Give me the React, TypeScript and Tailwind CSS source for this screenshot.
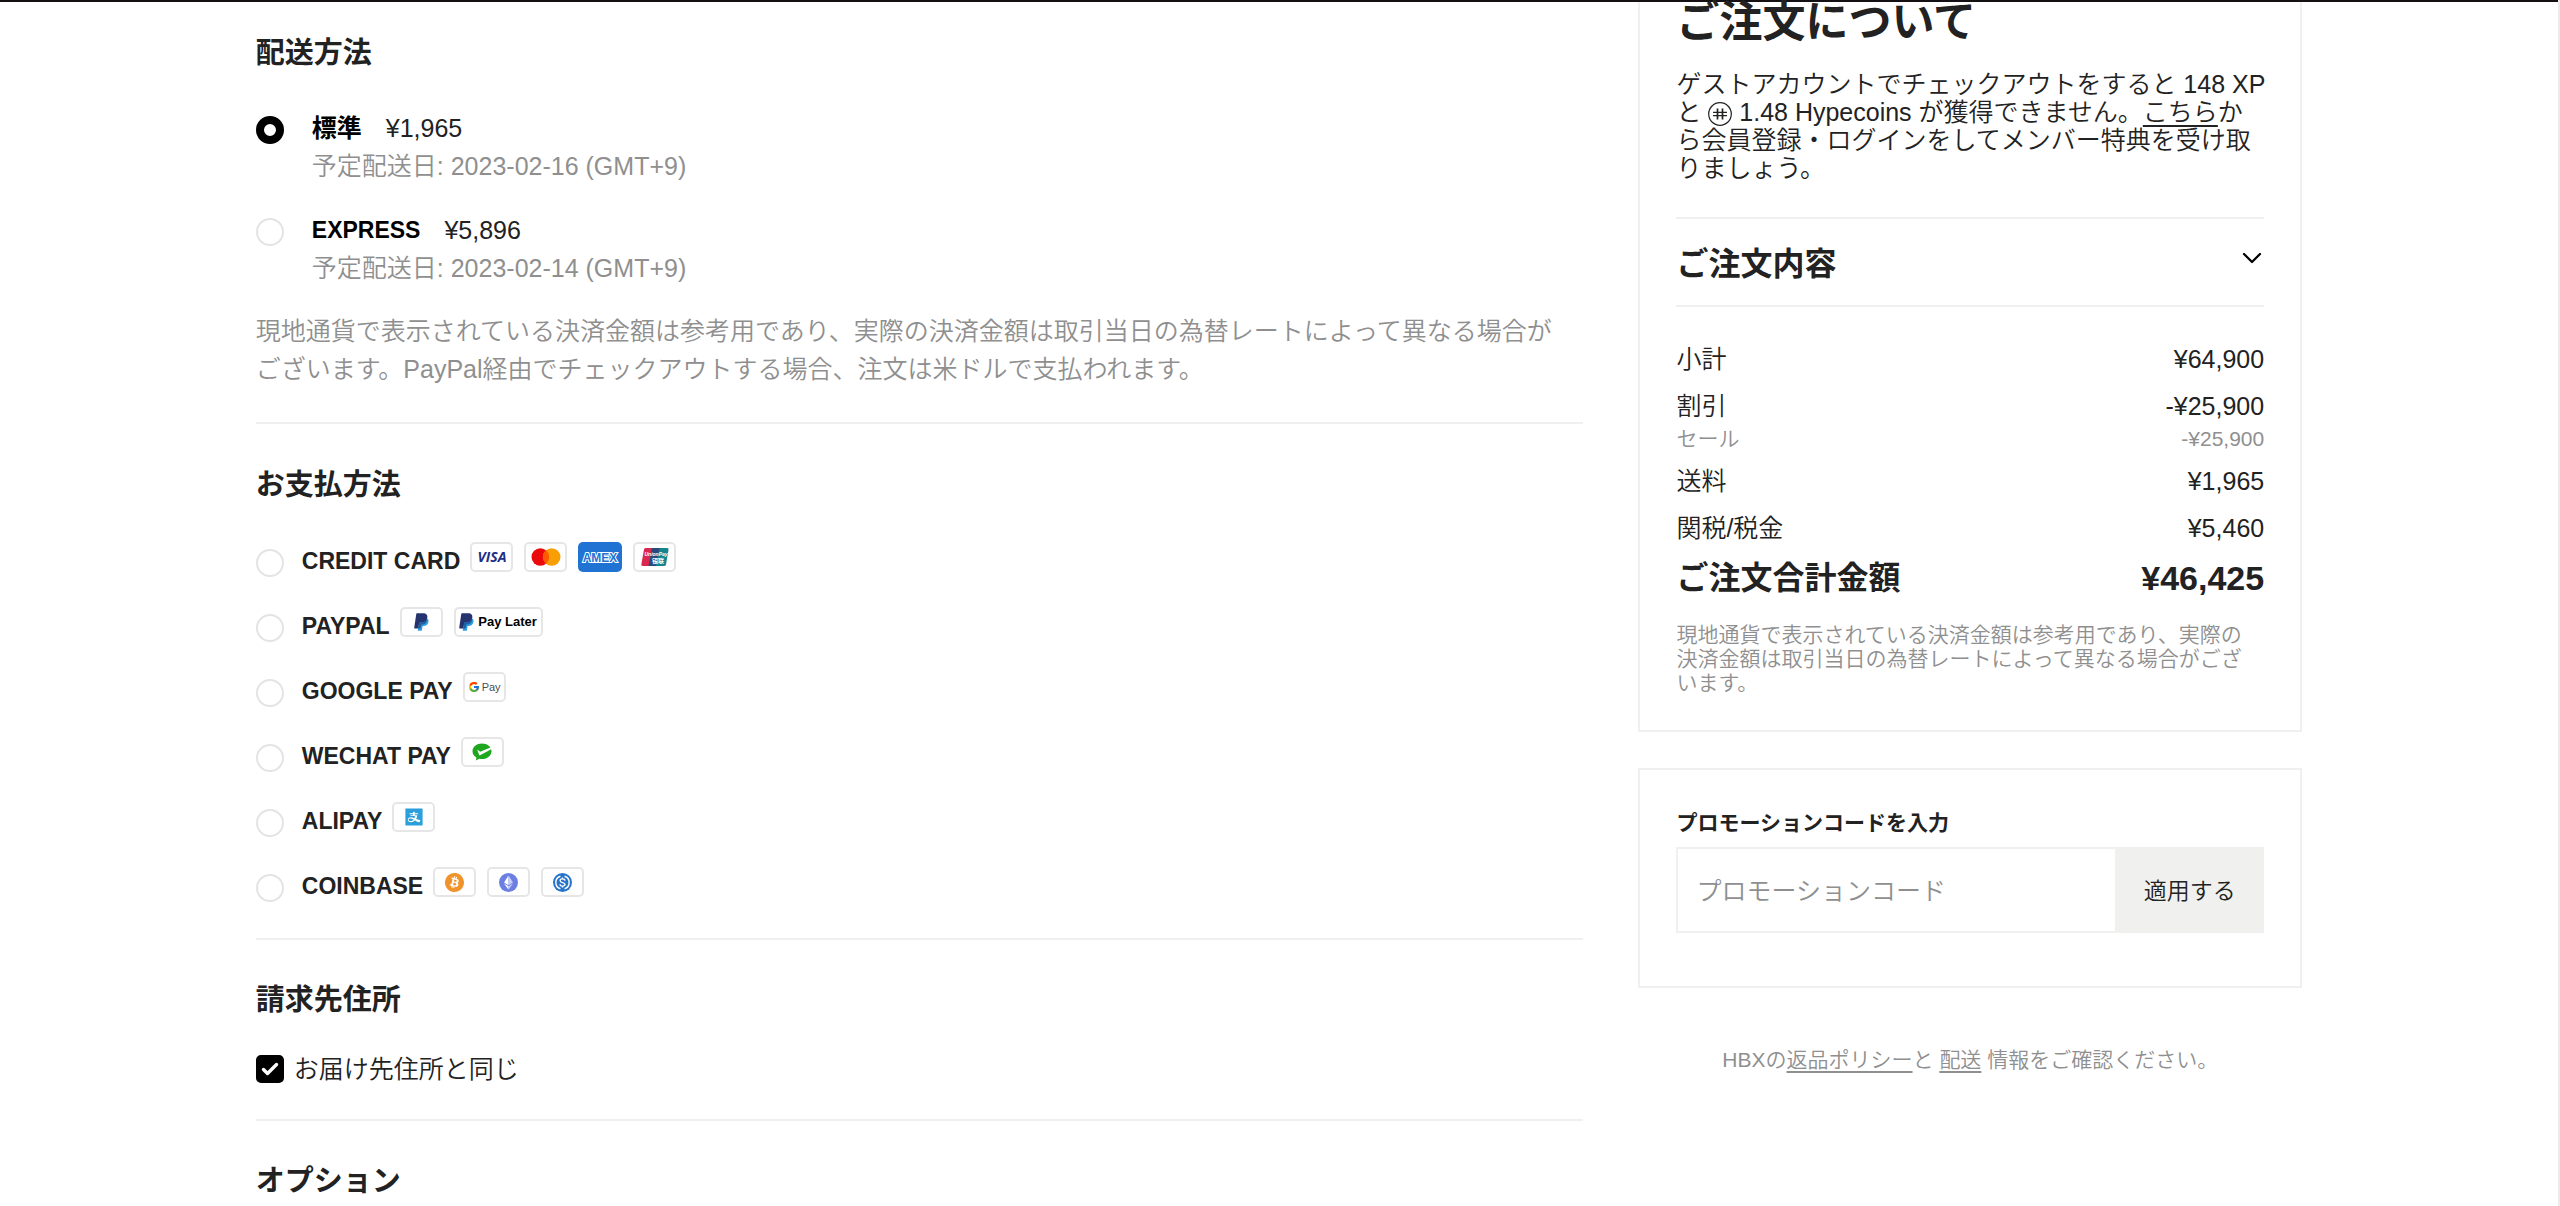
import React, { useState } from 'react';
import { ChevronDown } from 'lucide-react';
import { FcGoogle } from 'react-icons/fc';
import { AiFillAlipaySquare } from 'react-icons/ai';
import { SiBitcoin } from 'react-icons/si';

const Badge: React.FC<{ className?: string; children: React.ReactNode }> = ({
  className = 'w-[43px] border-2 border-[#e6e6e6] bg-white',
  children,
}) => (
  <span className={`flex h-[30px] shrink-0 items-center justify-center rounded-[5px] ${className}`}>
    {children}
  </span>
);

const Visa = () => (
  <Badge>
    <svg viewBox="0 0 38 24" className="h-6 w-[38px]" role="img" aria-label="Visa">
      <text x="19" y="17" textAnchor="middle" fontFamily="Open Sans, sans-serif" fontSize="14" fontWeight="700" fontStyle="italic" fill="#1f2f86">
        VISA
      </text>
    </svg>
  </Badge>
);

const Mastercard = () => (
  <Badge>
    <svg viewBox="0 0 30 18" className="h-[18px] w-[30px]" role="img" aria-label="Mastercard">
      <circle cx="9.3" cy="9" r="8.8" fill="#eb0a0b" />
      <circle cx="20.7" cy="9" r="8.8" fill="#f99f06" />
      <path d="M15 2.3a8.8 8.8 0 0 1 0 13.4a8.8 8.8 0 0 1 0-13.4z" fill="#ff5a00" />
    </svg>
  </Badge>
);

const Amex = () => (
  <Badge className="w-[44px] bg-[#2173d3]">
    <svg viewBox="0 0 44 24" className="h-6 w-11" role="img" aria-label="Amex">
      <text x="22" y="16.500" textAnchor="middle" fontFamily="Liberation Sans, sans-serif" fontSize="12" fontWeight="700" fill="#2173d3" stroke="#ffffff" strokeWidth="2" paintOrder="stroke">
        AMEX
      </text>
    </svg>
  </Badge>
);

const UnionPay = () => (
  <Badge>
    <svg viewBox="0 0 28 18" className="h-[18px] w-7" role="img" aria-label="UnionPay">
      <path d="M4.5 0H12L8.5 18H1.5Q0 18 .4 16L3 1.5Q3.3 0 4.5 0z" fill="#d9274f" />
      <path d="M11 0H20L16.500 18H7.500z" fill="#2b4a7c" />
      <path d="M18.500 0H26Q28 0 27.500 2L25 16.500Q24.700 18 23 18H15z" fill="#16848a" />
      <text x="15" y="8" textAnchor="middle" fontFamily="Liberation Sans, sans-serif" fontSize="5" fontWeight="700" fontStyle="italic" fill="#ffffff">
        UnionPay
      </text>
      <text x="17" y="15" textAnchor="middle" fontFamily="Noto Sans CJK JP, sans-serif" fontSize="6" fontWeight="700" fill="#ffffff">
        银联
      </text>
    </svg>
  </Badge>
);

const PayPalMark = () => (
  <svg viewBox="0 0 15 18" className="h-[18px] w-[15px]" aria-hidden="true">
    <path d="M6 5h6.200c2.100.600 2.700 2.200 2.200 4.200c-.7 2.900-2.600 3.800-5 3.800h-.8l-.7 4.200c-.1.400-.3.600-.7.600H3.700l.4-2.600z" fill="#2f9fe0" />
    <path d="M3 0.200h6.200c2.900 0 4.600 1.600 4.100 4.500c-.6 3.300-2.600 4.700-5.700 4.700H5.900c-.4 0-.6.200-.7.600L4.300 15.400H.7c-.4 0-.6-.3-.5-.7L2.300.8c0-.4.300-.6.700-.6z" fill="#25346f" />
    <path d="M12.900 5.800c-.7 2.400-2.500 3.600-5.300 3.600H5.900c-.4 0-.6.200-.7.600l-.9 5.400h2.300l.7-3.900c3.600.1 6.300-1.600 5.600-5.700z" fill="#1f5f9f" />
  </svg>
);

const PayPal = () => (
  <Badge>
    <PayPalMark />
  </Badge>
);

const PayLater = () => (
  <Badge className="w-[89px] gap-1 border-2 border-[#e6e6e6] bg-white">
    <PayPalMark />
    <span className="text-[13px] leading-4 font-bold whitespace-nowrap text-black">Pay Later</span>
  </Badge>
);

const GooglePay = () => (
  <Badge className="w-[43px] gap-[2px] border-2 border-[#e6e6e6] bg-white">
    <FcGoogle className="h-3 w-3 shrink-0" />
    <span className="text-[11px] leading-4 text-[#4a4d51]">Pay</span>
  </Badge>
);

const WeChat = () => (
  <Badge>
    <svg viewBox="0 0 20 18" className="h-[18px] w-5" aria-hidden="true">
      <path d="M10 .5C4.700.500.500 3.800.500 8.200c0 2.700 1.500 4.900 3.900 6.300L3.900 17.600l3.300-1.900c.9.200 1.800.300 2.800.300c5.300 0 9.500-3.400 9.500-7.800S15.300.500 10 .500z" fill="#1fa81f" />
      <path d="M5.200 6.600l3 2.200L19 4.200l.6 1.800L8.100 12.200c-.5.200-.9.100-1.100-.4z" fill="#ffffff" />
    </svg>
  </Badge>
);

const Alipay = () => (
  <Badge>
    <AiFillAlipaySquare className="h-[22px] w-[22px] text-[#2b9fdc]" />
  </Badge>
);

const Bitcoin = () => (
  <Badge>
    <SiBitcoin className="h-[19px] w-[19px] text-[#f0932a]" />
  </Badge>
);

const Ethereum = () => (
  <Badge>
    <svg viewBox="0 0 32 32" className="h-[19px] w-[19px]" aria-hidden="true">
      <circle cx="16" cy="16" r="16" fill="#6b7fe3" />
      <path d="M16 4l-7.500 12.200L16 20.700z" fill="#ffffff" />
      <path d="M16 4v16.700l7.500-4.500z" fill="#c9d0f6" />
      <path d="M8.500 17.800L16 28v-5.700z" fill="#ffffff" />
      <path d="M16 22.300V28l7.500-10.200z" fill="#c9d0f6" />
    </svg>
  </Badge>
);

const Usdc = () => (
  <Badge>
    <svg viewBox="0 0 32 32" className="h-[19px] w-[19px]" fill="none" aria-hidden="true">
      <circle cx="16" cy="16" r="16" fill="#2775ca" />
      <path d="M12.500 5.500a11 11 0 0 0 0 21M19.500 5.500a11 11 0 0 1 0 21" stroke="#ffffff" strokeWidth="2.400" />
      <path d="M20 13c0-2-1.700-3-4-3s-4 1-4 2.900c0 4.300 8.200 2 8.200 6.100c0 2-1.800 3.100-4.200 3.100s-4.200-1.100-4.200-3.100M16 7.500V10M16 22v2.500" stroke="#ffffff" strokeWidth="2.200" />
    </svg>
  </Badge>
);

const HypecoinIcon = () => (
  <svg viewBox="0 0 24 24" className="inline-block h-6 w-6 align-[-5px]" fill="none" stroke="#222222" aria-hidden="true">
    <circle cx="12" cy="12" r="11.300" strokeWidth="1.200" />
    <path d="M9.500 6.500v11M14.500 6.500v11" strokeWidth="1.700" />
    <path d="M5 10.300h14M5 13.700h14" strokeWidth="1.200" />
  </svg>
);

const shippingMethods = [
  { id: 'standard', name: '標準', nameClass: 'text-[25px]', price: '¥1,965', date: '2023-02-16' },
  { id: 'express', name: 'EXPRESS', nameClass: 'text-[23px]', price: '¥5,896', date: '2023-02-14' },
];

const paymentMethods = [
  { id: 'card', name: 'CREDIT CARD', badges: [Visa, Mastercard, Amex, UnionPay] },
  { id: 'paypal', name: 'PAYPAL', badges: [PayPal, PayLater] },
  { id: 'google', name: 'GOOGLE PAY', badges: [GooglePay] },
  { id: 'wechat', name: 'WECHAT PAY', badges: [WeChat] },
  { id: 'alipay', name: 'ALIPAY', badges: [Alipay] },
  { id: 'coinbase', name: 'COINBASE', badges: [Bitcoin, Ethereum, Usdc] },
];

const radioClass =
  'h-7 w-7 shrink-0 appearance-none rounded-full border-2 border-[#e4e4e4] bg-white checked:border-[8px] checked:border-black';

const SectionTitle: React.FC<{ children: React.ReactNode }> = ({ children }) => (
  <h2 className="text-[29px] leading-10 font-bold">{children}</h2>
);

const SummaryRow: React.FC<{ label: string; value: string }> = ({ label, value }) => (
  <div className="flex justify-between text-[25px] leading-[38px]">
    <dt>{label}</dt>
    <dd>{value}</dd>
  </div>
);

const App: React.FC = () => {
  const [shipping, setShipping] = useState('standard');
  const [payment, setPayment] = useState('');
  const [sameAddress, setSameAddress] = useState(true);
  const [promoCode, setPromoCode] = useState('');

  return (
    <div className="flex min-h-screen bg-white font-['Liberation_Sans','Noto_Sans_CJK_JP',sans-serif] font-[350] text-[#222222]">
      <div className="min-w-0 flex-1">
        <div className="h-[2px] bg-[#141014]" />

        <main className="grid grid-cols-[minmax(0,2fr)_minmax(0,1fr)] gap-[55px] px-[10%]">
          <div>
            <section className="border-b-2 border-[#f0f0f0] pt-[31px] pb-[34px]">
              <SectionTitle>配送方法</SectionTitle>
              <div className="mt-9 flex flex-col gap-[26px]">
                {shippingMethods.map((method) => (
                  <label key={method.id} className="flex items-start gap-7">
                    <input
                      type="radio"
                      name="shipping"
                      className={`mt-[7px] ${radioClass}`}
                      checked={shipping === method.id}
                      onChange={() => setShipping(method.id)}
                    />
                    <span className="block text-[25px] leading-[38px]">
                      <span className="flex gap-6">
                        <span className={`font-bold text-black ${method.nameClass}`}>{method.name}</span>
                        <span>{method.price}</span>
                      </span>
                      <span className="block text-[#8f8f8f]">予定配送日: {method.date} (GMT+9)</span>
                    </span>
                  </label>
                ))}
              </div>
              <p className="mt-[25px] text-[25px] leading-[38px] text-[#8f8f8f]">
                現地通貨で表示されている決済金額は参考用であり、実際の決済金額は取引当日の為替レートによって異なる場合が
                <br />
                ございます。PayPal経由でチェックアウトする場合、注文は米ドルで支払われます。
              </p>
            </section>

            <section className="border-b-2 border-[#f0f0f0] pt-[41px] pb-[30px]">
              <SectionTitle>お支払方法</SectionTitle>
              <div className="mt-[38px] flex flex-col gap-[25px]">
                {paymentMethods.map((method) => (
                  <label key={method.id} className="flex h-10 items-center">
                    <input
                      type="radio"
                      name="payment"
                      className={radioClass}
                      checked={payment === method.id}
                      onChange={() => setPayment(method.id)}
                    />
                    <span className="pb-1 pl-[18px] text-[23px] leading-7 font-bold">{method.name}</span>
                    <span className="flex gap-[11px] pb-3 pl-[10px]">
                      {method.badges.map((Icon, index) => (
                        <Icon key={index} />
                      ))}
                    </span>
                  </label>
                ))}
              </div>
            </section>

            <section className="border-b-2 border-[#f0f0f0] pt-10 pb-[31px]">
              <SectionTitle>請求先住所</SectionTitle>
              <label className="mt-[30px] flex items-center gap-[10px] text-[25px] leading-[38px]">
                <span className="relative flex h-7 w-7 shrink-0">
                  <input
                    type="checkbox"
                    className="peer h-7 w-7 appearance-none rounded-[5px] border-2 border-[#e4e4e4] checked:border-black checked:bg-black"
                    checked={sameAddress}
                    onChange={(e) => setSameAddress(e.target.checked)}
                  />
                  <svg
                    viewBox="0 0 28 28"
                    className="pointer-events-none absolute inset-0 hidden h-7 w-7 peer-checked:block"
                    fill="none"
                    aria-hidden="true"
                  >
                    <path d="M7.500 14.500l4 4l9-9" stroke="#ffffff" strokeWidth="3.400" strokeLinecap="round" strokeLinejoin="round" />
                  </svg>
                </span>
                お届け先住所と同じ
              </label>
            </section>

            <section className="pt-10">
              <SectionTitle>オプション</SectionTitle>
            </section>
          </div>

          <aside>
            <div className="border-x-2 border-b-2 border-[#f0f0f0] px-9 pb-[35px]">
              <h1 className="text-[43px] leading-10 font-bold">ご注文について</h1>
              <p className="mt-7 pb-[35px] text-[25px] leading-7 whitespace-nowrap">
                ゲストアカウントでチェックアウトをすると 148 XP
                <br />
                と <HypecoinIcon /> 1.48 Hypecoins が獲得できません。
                <a href="#login" className="underline underline-offset-4">こちら</a>か
                <br />
                ら会員登録・ログインをしてメンバー特典を受け取
                <br />
                りましょう。
              </p>

              <button
                type="button"
                className="flex h-[90px] w-full items-center justify-between border-y-2 border-[#f0f0f0] pt-[3px] text-left"
              >
                <span className="text-[32px] leading-10 font-bold">ご注文内容</span>
                <ChevronDown className="-mr-1 mb-3 h-8 w-8 text-black" strokeWidth={1.7} />
              </button>

              <dl className="flex flex-col gap-[9px] pt-[33px]">
                <SummaryRow label="小計" value="¥64,900" />
                <div>
                  <SummaryRow label="割引" value="-¥25,900" />
                  <div className="flex justify-between text-[21px] leading-7 text-[#8f8f8f]">
                    <dt>セール</dt>
                    <dd>-¥25,900</dd>
                  </div>
                </div>
                <SummaryRow label="送料" value="¥1,965" />
                <SummaryRow label="関税/税金" value="¥5,460" />
                <div className="flex items-center justify-between pt-[2px] leading-10 font-bold">
                  <dt className="text-[32px]">ご注文合計金額</dt>
                  <dd className="text-[34px]">¥46,425</dd>
                </div>
              </dl>

              <p className="mt-[25px] text-[21px] leading-6 text-[#8f8f8f]">
                現地通貨で表示されている決済金額は参考用であり、実際の
                <br />
                決済金額は取引当日の為替レートによって異なる場合がござ
                <br />
                います。
              </p>
            </div>

            <form
              className="mt-9 border-2 border-[#f0f0f0] px-9 pt-10 pb-[53px]"
              onSubmit={(e) => e.preventDefault()}
            >
              <label htmlFor="promo" className="block text-[21px] leading-[26px] font-bold">
                プロモーションコードを入力
              </label>
              <div className="mt-[11px] flex h-[86px]">
                <input
                  id="promo"
                  type="text"
                  className="min-w-0 flex-1 border-2 border-r-0 border-[#f0f0f0] px-[18px] pt-1 text-[25px] placeholder:text-[#8f8f8f]"
                  placeholder="プロモーションコード"
                  value={promoCode}
                  onChange={(e) => setPromoCode(e.target.value)}
                />
                <button type="submit" className="w-[149px] bg-[#f0f0ee] pt-[2px] text-[23px]">
                  適用する
                </button>
              </div>
            </form>

            <p className="mt-[59px] text-center text-[21px] leading-[26px] text-[#8f8f8f]">
              HBXの<a href="#returns" className="underline underline-offset-4">返品ポリシー</a>と{' '}
              <a href="#shipping" className="underline underline-offset-4">配送</a> 情報をご確認ください。
            </p>
          </aside>
        </main>
      </div>
      <div className="w-[2px] bg-[#ebebeb]" />
    </div>
  );
};

export default App;
